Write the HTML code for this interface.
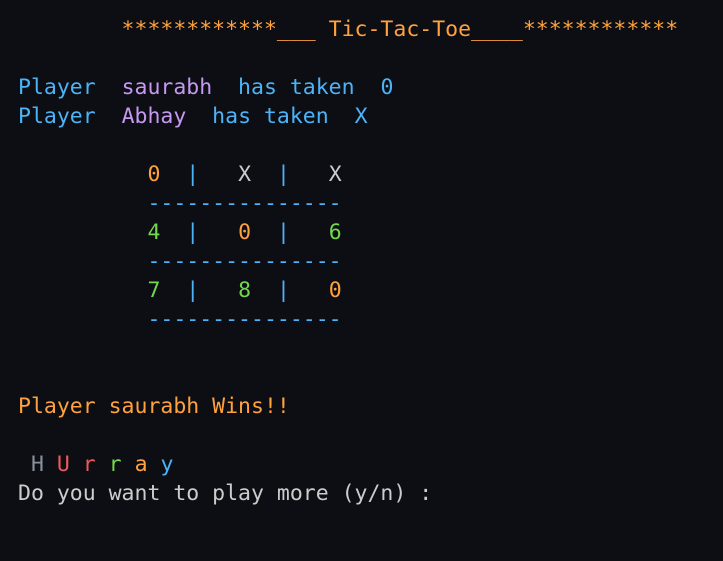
<!DOCTYPE html>
<html><head><meta charset="utf-8"><style>
html,body{margin:0;padding:0;background:#0c0e14;width:723px;height:561px;overflow:hidden}
pre{margin:0;position:absolute;left:18px;top:15px;font-family:"DejaVu Sans Mono","Liberation Mono",monospace;font-size:21.5px;line-height:29px;color:#cccccc}
.o{color:#ffa23e}.b{color:#4cb3f7}.p{color:#c698f0}.g{color:#72d84c}.r{color:#f0585a}.h{color:#8b9099}.w{color:#cccccc}
</style></head><body><pre><span class="o">        ************___ Tic-Tac-Toe____************</span>

<span class="b">Player  </span><span class="p">saurabh</span><span class="b">  has taken  0</span>
<span class="b">Player  </span><span class="p">Abhay</span><span class="b">  has taken  X</span>

          <span class="o">0</span>  <span class="b">|</span>   <span class="w">X</span>  <span class="b">|</span>   <span class="w">X</span>
          <span class="b">---------------</span>
          <span class="g">4</span>  <span class="b">|</span>   <span class="o">0</span>  <span class="b">|</span>   <span class="g">6</span>
          <span class="b">---------------</span>
          <span class="g">7</span>  <span class="b">|</span>   <span class="g">8</span>  <span class="b">|</span>   <span class="o">0</span>
          <span class="b">---------------</span>


<span class="o">Player saurabh Wins!!</span>

 <span class="h">H</span> <span class="r">U</span> <span class="r">r</span> <span class="g">r</span> <span class="o">a</span> <span class="b">y</span>
Do you want to play more (y/n) :</pre></body></html>
